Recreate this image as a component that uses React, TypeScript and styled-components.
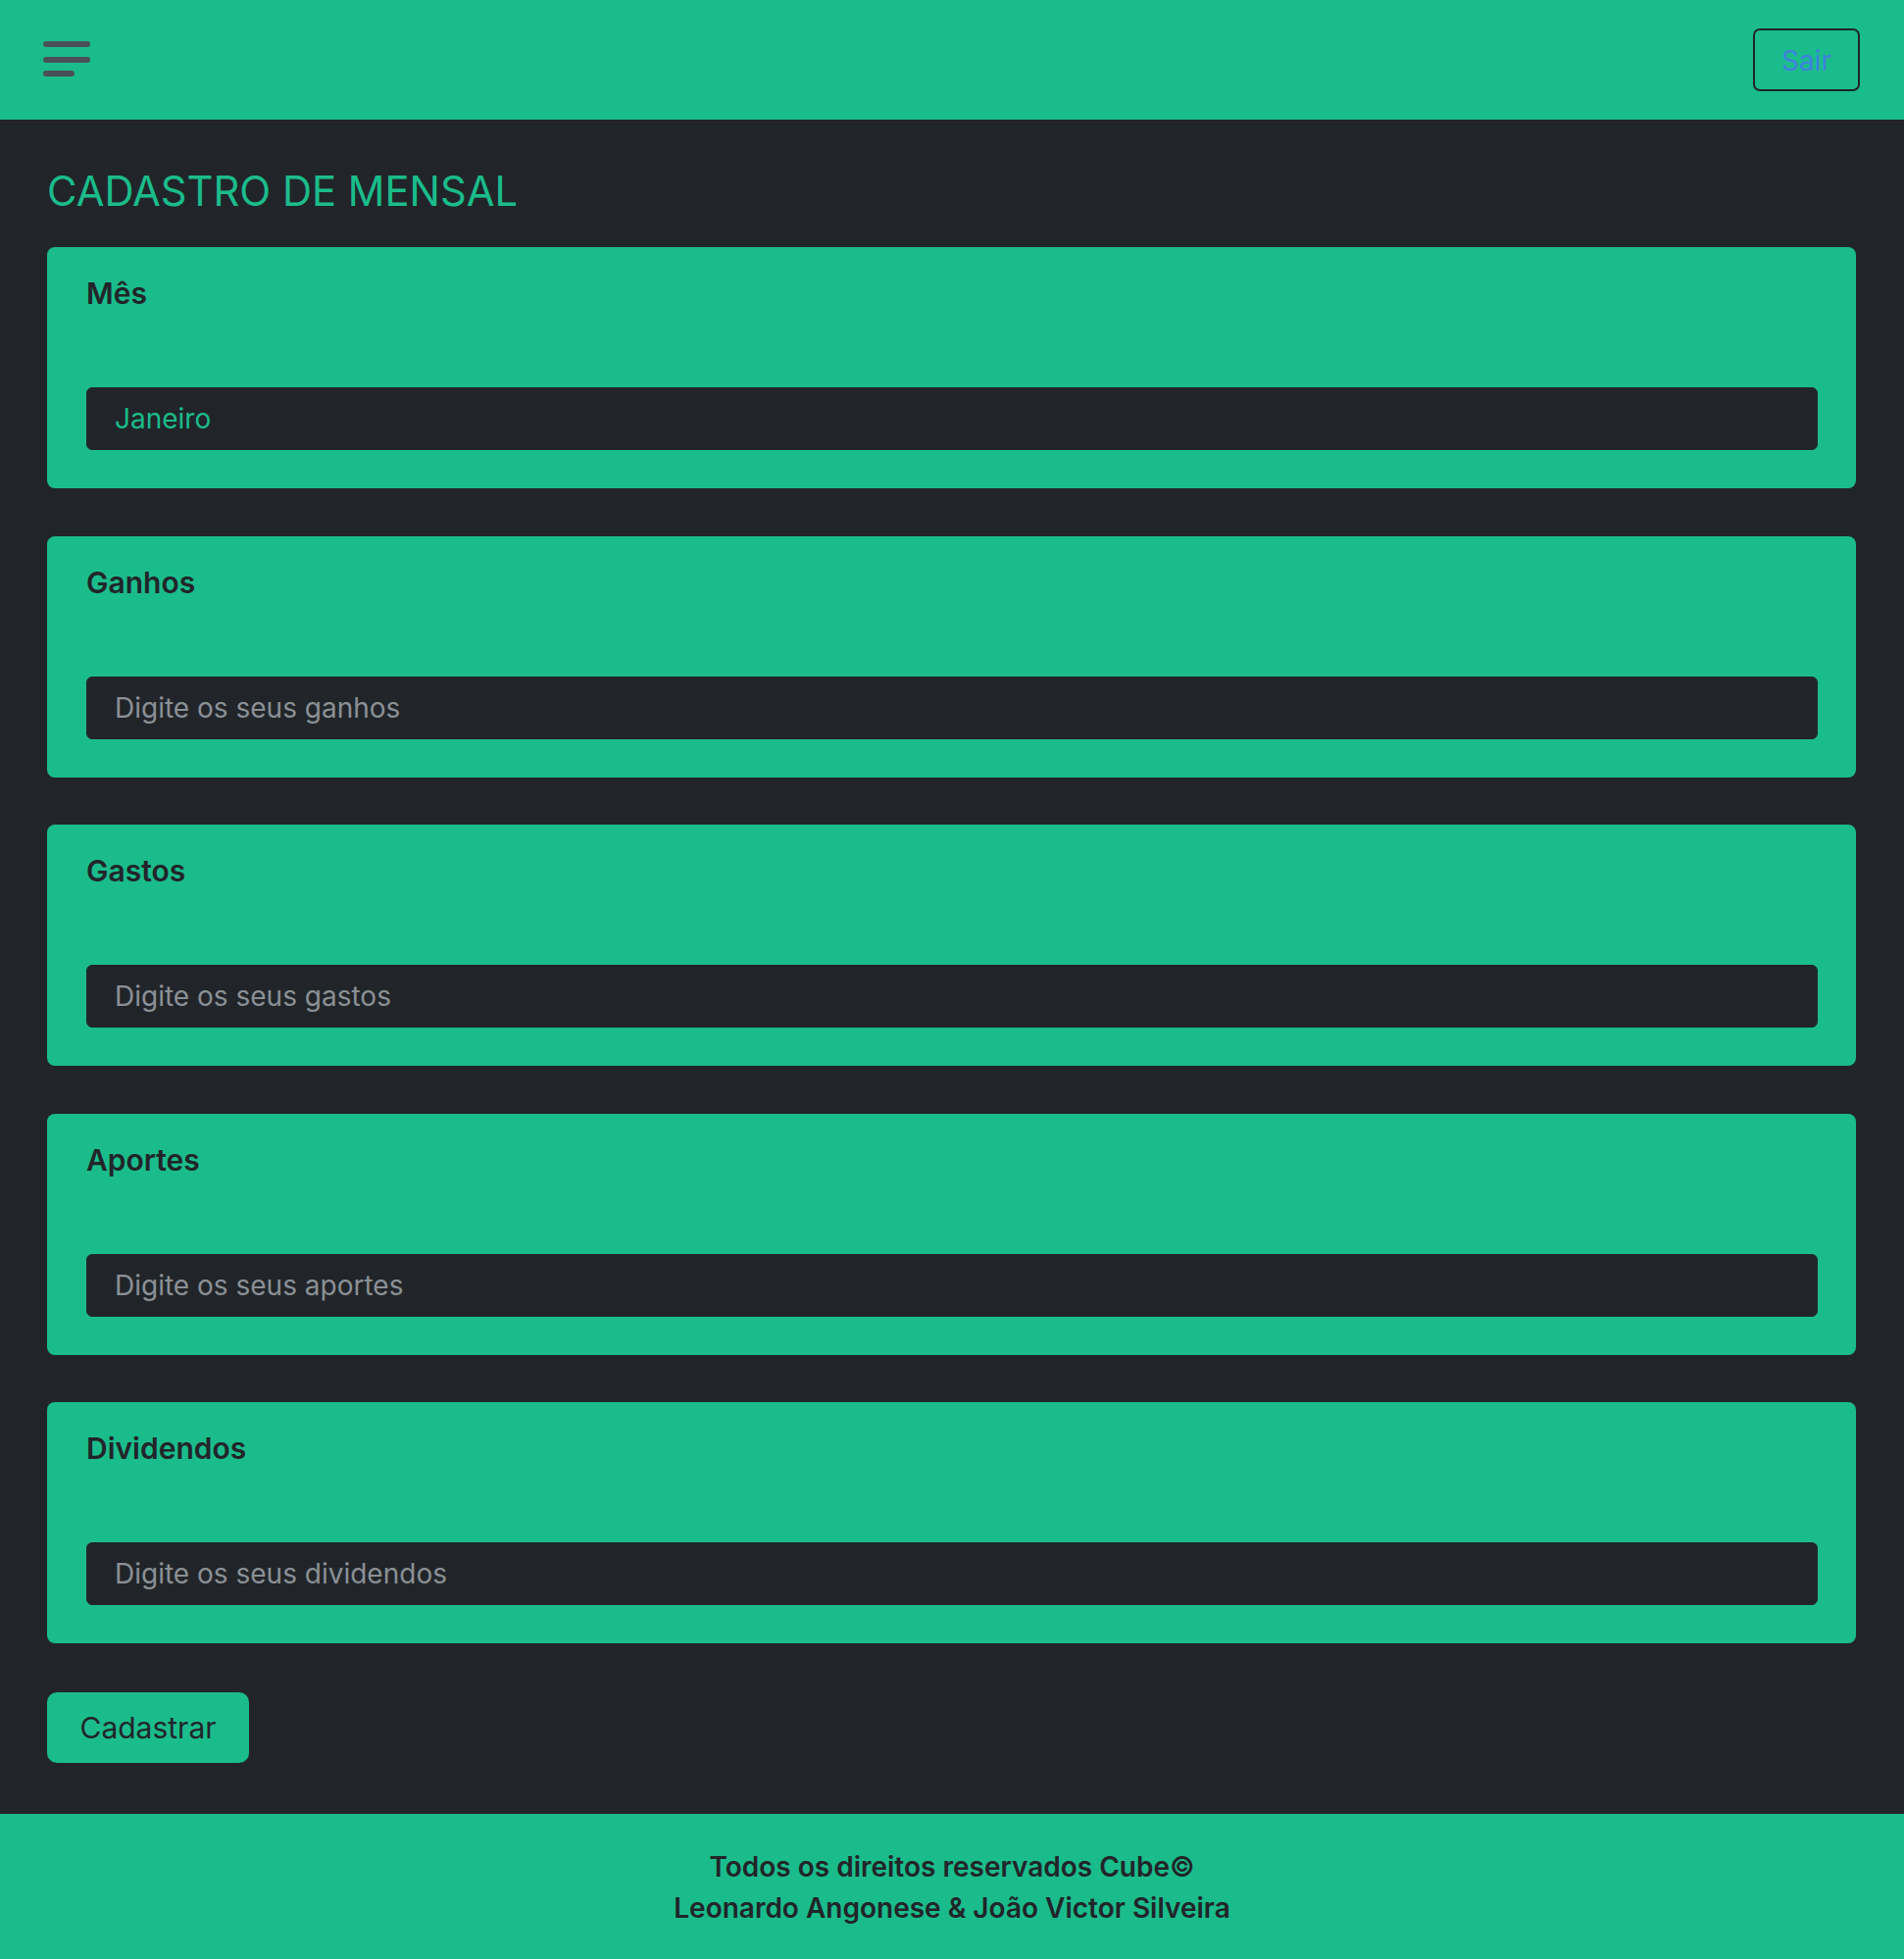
import React from "react";
import styled, { createGlobalStyle } from "styled-components";

const Global = createGlobalStyle`
  html, body { margin: 0; padding: 0; background: #212529; }
  body { font-family: Inter, "Noto Sans", sans-serif; }
  * { box-sizing: border-box; }
`;

const GREEN = "#1bbc8b";
const DARK = "#212529";

const Page = styled.div`
  display: flex;
  flex-direction: column;
  min-height: 1998px;
  background: ${DARK};
`;

const Header = styled.header`
  height: 122px;
  background: ${GREEN};
  display: flex;
  align-items: center;
  justify-content: space-between;
  padding: 0 45px 0 44px;
`;

const MenuButton = styled.button`
  background: none;
  border: none;
  padding: 0;
  margin-top: -2px;
  display: flex;
  flex-direction: column;
  gap: 10px;
  cursor: pointer;
`;

const MenuLine = styled.span<{ $w: number; $tight?: boolean }>`
  display: block;
  width: ${(p) => p.$w}px;
  height: 6px;
  border-radius: 3px;
  background: #495057;
  margin-top: ${(p) => (p.$tight ? "-2px" : "0")};
`;

const LogoutButton = styled.button`
  width: 109px;
  height: 64px;
  border: 2px solid ${DARK};
  border-radius: 7px;
  background: transparent;
  color: #3f80e0;
  font-family: Inter, sans-serif;
  font-size: 28px;
  padding: 2px 0 0;
`;

const Main = styled.main`
  flex: 1;
  padding: 49px 49px 52px 48px;
  display: flex;
  flex-direction: column;
`;

const Title = styled.h2`
  margin: 0 0 32px;
  color: ${GREEN};
  font-weight: 400;
  font-size: 41.7px;
  line-height: 49px;
`;

const Cards = styled.div`
  display: flex;
  flex-direction: column;
  gap: 48.5px;
`;

const Card = styled.section`
  background: ${GREEN};
  border-radius: 8px;
  height: 246px;
  padding: 29px 39px 39px 40px;
  display: flex;
  flex-direction: column;
  justify-content: space-between;
`;

const Label = styled.label`
  color: ${DARK};
  font-weight: 600;
  font-size: 30px;
  line-height: 36px;
`;

const Input = styled.input`
  width: 100%;
  height: 64px;
  background: ${DARK};
  border: 1px solid ${DARK};
  border-radius: 6px;
  padding: 0 28px;
  color: ${GREEN};
  font-family: Inter, sans-serif;
  font-size: 28px;
  outline: none;
  &::placeholder {
    color: #8b9095;
  }
`;

const SubmitButton = styled.button`
  align-self: flex-start;
  margin-top: 50px;
  width: 206px;
  height: 72px;
  background: ${GREEN};
  border: none;
  border-radius: 10px;
  color: ${DARK};
  font-family: Inter, sans-serif;
  font-size: 30px;
  padding: 0;
`;

const Footer = styled.footer`
  height: 148px;
  background: ${GREEN};
  display: flex;
  flex-direction: column;
  align-items: center;
  justify-content: center;
  padding-top: 1px;
`;

const FooterLine = styled.p`
  margin: 0;
  color: ${DARK};
  font-weight: 600;
  font-size: 28px;
  line-height: 42px;
`;

const fields = [
  { label: "Mês", value: "Janeiro" },
  { label: "Ganhos", placeholder: "Digite os seus ganhos" },
  { label: "Gastos", placeholder: "Digite os seus gastos" },
  { label: "Aportes", placeholder: "Digite os seus aportes" },
  { label: "Dividendos", placeholder: "Digite os seus dividendos" },
];

export default function App() {
  return (
    <Page>
      <Global />
      <Header>
        <MenuButton aria-label="menu">
          <MenuLine $w={48} />
          <MenuLine $w={48} />
          <MenuLine $w={32} $tight />
        </MenuButton>
        <LogoutButton>Sair</LogoutButton>
      </Header>
      <Main>
        <Title>CADASTRO DE MENSAL</Title>
        <Cards>
          {fields.map((f) => (
            <Card key={f.label}>
              <Label>{f.label}</Label>
              <Input
                defaultValue={f.value}
                placeholder={f.placeholder}
                readOnly={!!f.value}
              />
            </Card>
          ))}
        </Cards>
        <SubmitButton>Cadastrar</SubmitButton>
      </Main>
      <Footer>
        <FooterLine>Todos os direitos reservados Cube©</FooterLine>
        <FooterLine>Leonardo Angonese &amp; João Victor Silveira</FooterLine>
      </Footer>
    </Page>
  );
}
